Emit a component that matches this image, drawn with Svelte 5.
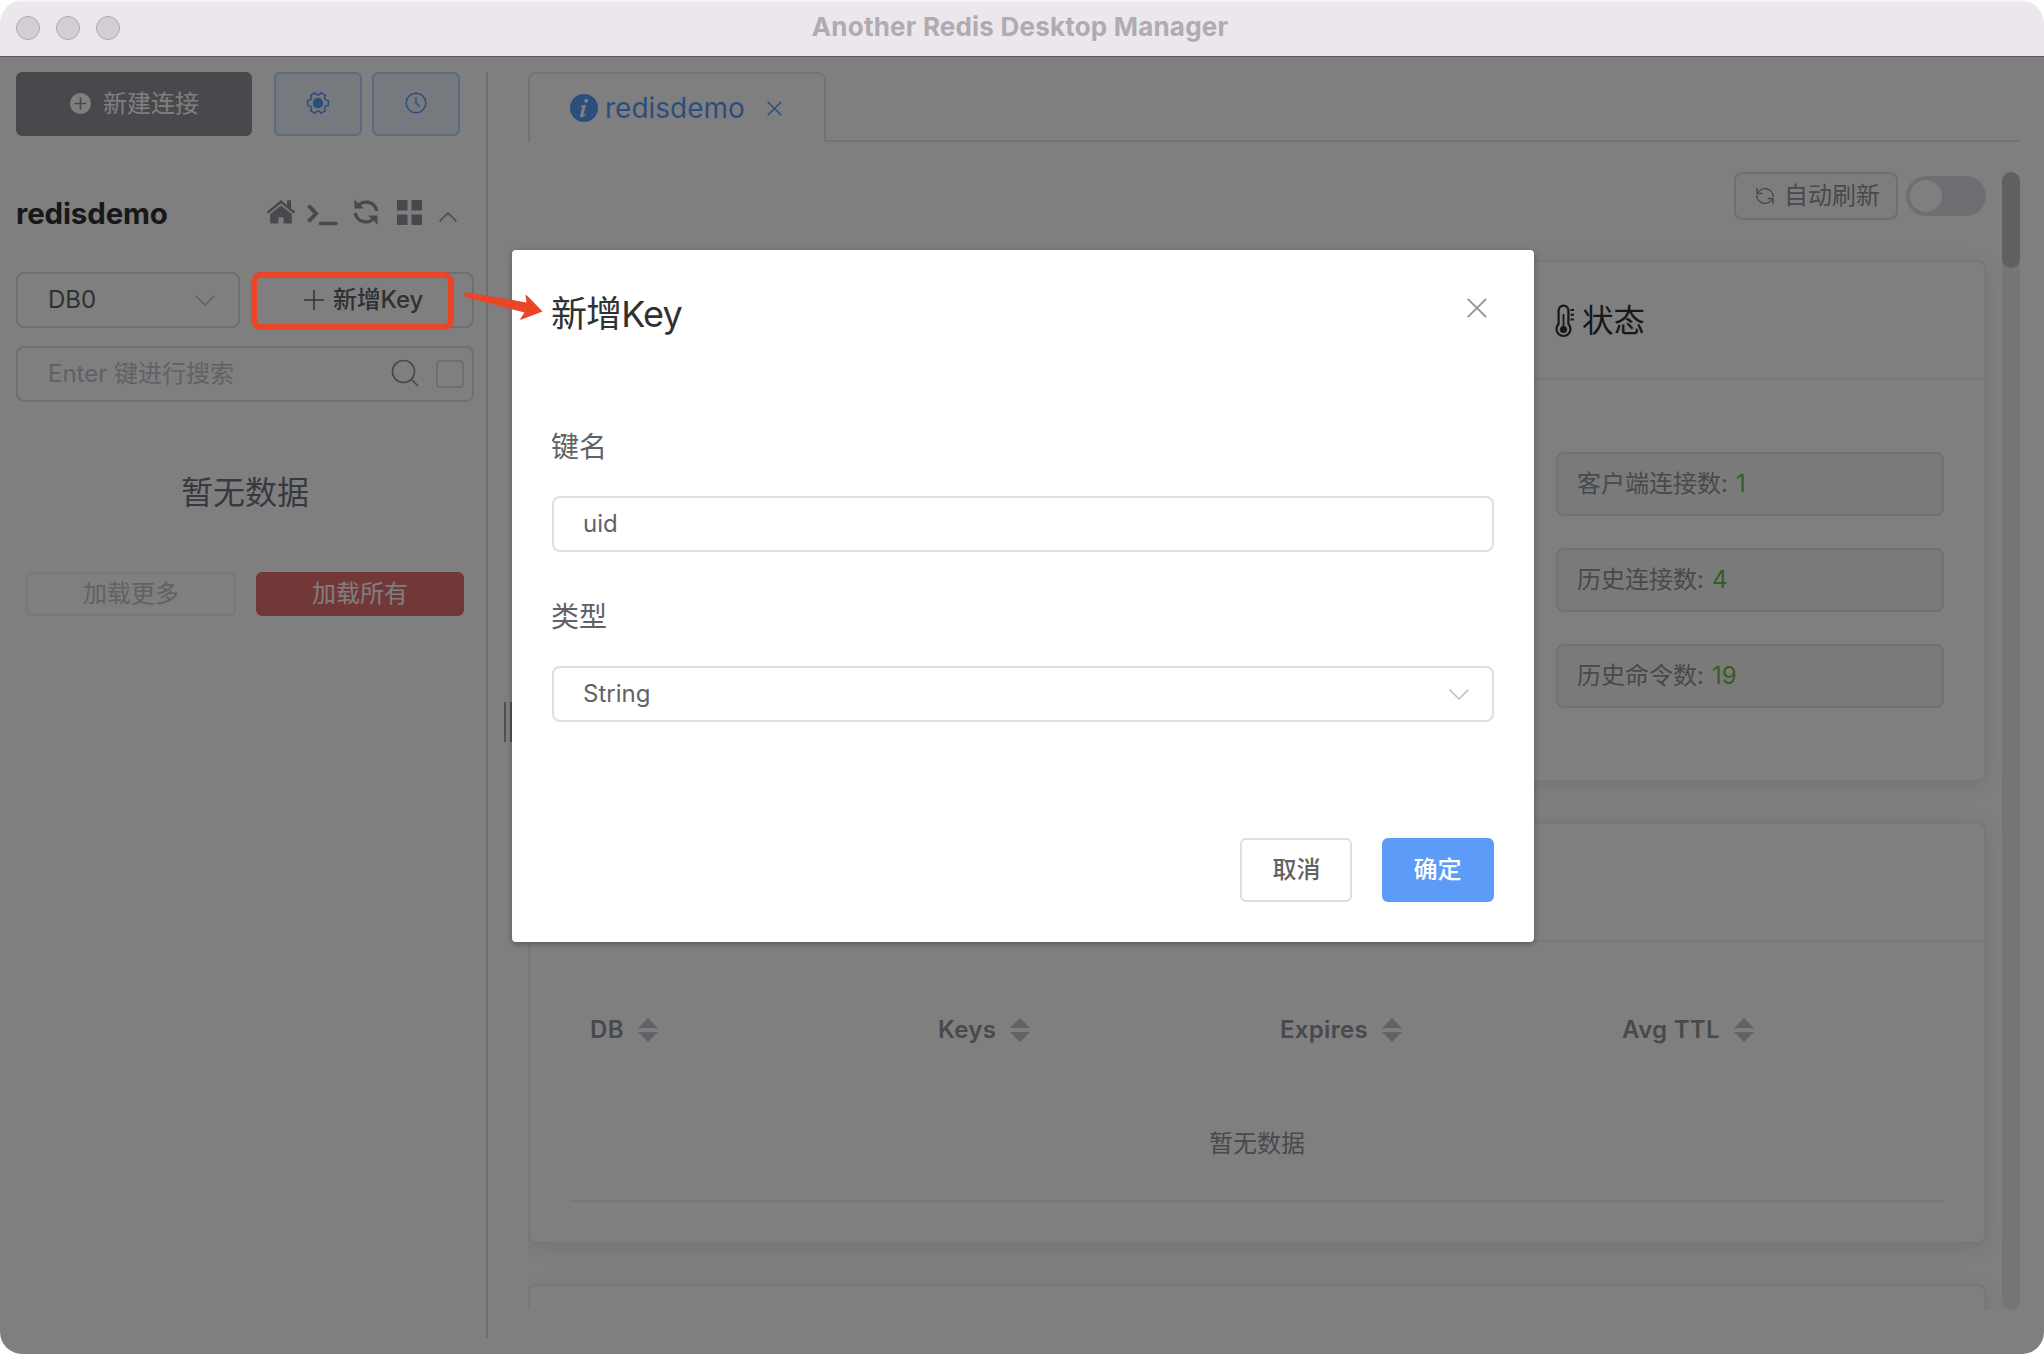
<script>
  const stats = [
    { label: '客户端连接数:', value: 1 },
    { label: '历史连接数:', value: 4 },
    { label: '历史命令数:', value: 19 }
  ];
  const columns = ['DB', 'Keys', 'Expires', 'Avg TTL'];
  let keyName = $state('uid');

  // Outline of the six-toothed settings gear, centred on (11, 11)
  const point = (deg, r) => {
    const a = (deg * Math.PI) / 180;
    return `${(11 + r * Math.cos(a)).toFixed(2)} ${(11 + r * Math.sin(a)).toFixed(2)}`;
  };
  const gear =
    'M' +
    [0, 60, 120, 180, 240, 300]
      .flatMap((d) => [point(d - 21, 8.3), point(d - 14, 10.7), point(d + 14, 10.7), point(d + 21, 8.3)])
      .join('L') +
    'Z';
</script>

<div class="window">
  <header class="titlebar">
    <div class="lights"><i></i><i></i><i></i></div>
    <h1>Another Redis Desktop Manager</h1>
  </header>

  <div class="content">
    <aside class="sidebar">
      <div class="top-actions">
        <button class="btn new-conn">
          <svg width="21" height="21" viewBox="0 0 21 21"><circle cx="10.5" cy="10.5" r="10.5" fill="#fff" /><path d="M10.5 4.5v12M4.5 10.5h12" stroke="#909399" stroke-width="1.6" /></svg>
          <span>新建连接</span>
        </button>
        <button class="btn plain gear" aria-label="settings">
          <svg width="22" height="22" viewBox="0 0 22 22" overflow="visible"><path d={gear} fill="none" stroke="#5a9cf8" stroke-width="1.5" stroke-linejoin="round" /><circle cx="11" cy="11" r="5.2" fill="#5a9cf8" /></svg>
        </button>
        <button class="btn plain clock" aria-label="history">
          <svg width="22" height="22" viewBox="0 0 22 22" fill="none" stroke="#5a9cf8" stroke-width="1.5"><circle cx="11" cy="11" r="9.8" /><path d="M11 5V11l3.600 3.800" /></svg>
        </button>
      </div>

      <div class="conn-head">
        <strong>redisdemo</strong>
        <div class="conn-icons">
          <svg width="30" height="26" viewBox="0 0 30 26" fill="#909399"><path d="M15 1L.7 12.7l1.5 2L15 4.500l12.800 10.200 1.500-2L25 9.200V1.300h-4v4.600z" /><path d="M15 6.500L4.200 15v9.600h8.200v-6h5.200v6h8.200V15z" /></svg>
          <svg class="term" width="33" height="24" viewBox="0 0 33 24" fill="none" stroke="#909399" stroke-linecap="round"><path d="M2.500 3.500l7.500 8-7.500 8" stroke-width="4" stroke-linecap="butt" /><path d="M14.500 21.500h15.500" stroke-width="3.600" /></svg>
          <svg class="sync" width="28" height="28" viewBox="0 0 28 28" fill="none" stroke="#909399" stroke-width="3.400"><path d="M5 9.500A10.600 10.600 0 0 1 24.700 13" /><path d="M23 18.500A10.600 10.600 0 0 1 3.300 15" /><path d="M2.500 1.500v9h9.500L9 7.500 5.500 4.500z" fill="#909399" stroke="none" /><path d="M25.500 26.500v-9H16l3 3 3.500 3z" fill="#909399" stroke="none" /></svg>
          <svg class="grid" width="25" height="25" viewBox="0 0 25 25" fill="#909399"><path d="M0 0h10.500v10.500H0zM14.500 0H25v10.500H14.500zM0 14.500h10.500V25H0zM14.500 14.500H25V25H14.500z" /></svg>
          <svg class="caret" width="18" height="10" viewBox="0 0 18 10" fill="none" stroke="#909399" stroke-width="1.5"><path d="M.5 9.500L9 1l8.500 8.500" /></svg>
        </div>
      </div>

      <div class="key-row">
        <div class="field db">
          <span>DB0</span>
          <svg width="20" height="11" viewBox="0 0 20 11" fill="none" stroke="#c0c4cc" stroke-width="1.6"><path d="M.6.6L10 10l9.400-9.400" /></svg>
        </div>
        <div class="field add">
          <svg width="20" height="20" viewBox="0 0 20 20" stroke="#606266" stroke-width="1.5"><path d="M10 0v20M0 10h20" /></svg>
          <span>新增Key</span>
        </div>
      </div>

      <div class="field search">
        <span>Enter 键进行搜索</span>
        <svg width="28" height="28" viewBox="0 0 28 28" fill="none" stroke="#909399" stroke-width="1.7"><circle cx="12.5" cy="12.5" r="11" /><path d="M20.500 20.500l6.500 6.500" /></svg>
        <i class="check"></i>
      </div>

      <p class="side-empty">暂无数据</p>

      <div class="load-row">
        <button class="btn load more">加载更多</button>
        <button class="btn load all">加载所有</button>
      </div>
    </aside>

    <div class="resizer"><i></i><i></i></div>

    <main>
      <nav class="tabs">
        <div class="tab">
          <svg width="28" height="28" viewBox="0 0 28 28"><circle cx="14" cy="14" r="14" fill="#5a9cf8" /><path d="M11 11.800c2-.2 3.200-.5 5.200-1.200l-2.700 9.600c-.3 1.100.5 1 2.200-1l.6.5c-1.900 2.600-3.200 3.500-4.700 3.500-1.400 0-1.800-.9-1.400-2.300l1.900-6.700c.3-1-.1-1.300-1.300-1.500z" fill="#fff" /><circle cx="16.2" cy="6.700" r="2" fill="#fff" /></svg>
          <span>redisdemo</span>
          <svg class="tab-x" width="15" height="15" viewBox="0 0 15 15" stroke="#5a9cf8" stroke-width="1.5"><path d="M.7.7l13.600 13.600M14.300.7L.7 14.300" /></svg>
        </div>
      </nav>

      <div class="scroller">
        <div class="view">
          <div class="refresh-row">
            <div class="refresh">
              <svg width="20" height="20" viewBox="0 0 20 20" fill="none" stroke="#909399" stroke-width="1.5"><path d="M3 7.200A8 8 0 0 1 18.200 11" /><path d="M17 12.800A8 8 0 0 1 1.800 9" /><path d="M2 2v5.600h5.600" /><path d="M18 18v-5.600h-5.600" /></svg>
              <span>自动刷新</span>
            </div>
            <div class="switch"><i></i></div>
          </div>

          <div class="cards">
            <section class="card"><div class="card-head"></div></section>
            <section class="card"><div class="card-head"></div></section>
            <section class="card">
              <div class="card-head">
                <svg width="20" height="35" viewBox="0 0 20 35" fill="none" stroke="#303133" stroke-width="2.2"><path d="M3.600 20V6.500a4.900 4.900 0 0 1 9.800 0V20a7 7 0 1 1-9.800 0z" /><circle cx="8.5" cy="25.5" r="3.6" fill="#303133" stroke="none" /><path d="M8.500 10v15" stroke-width="1.8" /><path d="M15.500 6H19M15.500 10.700H19M15.500 15.400H19" stroke-width="2" /></svg>
                <span>状态</span>
              </div>
              <div class="stats">
                {#each stats as s}
                  <div class="stat">{s.label} <b>{s.value}</b></div>
                {/each}
              </div>
            </section>
          </div>

          <section class="card keys">
            <div class="card-head"></div>
            <div class="table">
              <div class="thead">
                {#each columns as c}
                  <div class="th">
                    <span>{c}</span>
                    <svg width="20" height="24" viewBox="0 0 20 24" fill="#c0c4cc"><path d="M10 0l10 10H0zM10 24L0 14h20z" /></svg>
                  </div>
                {/each}
              </div>
              <div class="tbody">暂无数据</div>
            </div>
          </section>

          <section class="card next"></section>
        </div>
        <div class="track"><i></i></div>
      </div>
    </main>

    <div class="mask"></div>
  </div>

  <div class="dialog">
    <div class="dialog-head">
      <h2>新增Key</h2>
      <svg width="20" height="20" viewBox="0 0 20 20" stroke="#909399" stroke-width="1.8"><path d="M.8.8l18.400 18.400M19.200.8L.8 19.200" /></svg>
    </div>
    <div class="label">键名</div>
    <input class="control" bind:value={keyName} />
    <div class="label second">类型</div>
    <div class="control select">
      <span>String</span>
      <svg width="20" height="11" viewBox="0 0 20 11" fill="none" stroke="#c0c4cc" stroke-width="1.7"><path d="M.6.6L10 10l9.400-9.400" /></svg>
    </div>
    <div class="dialog-foot">
      <button class="btn cancel">取消</button>
      <button class="btn ok">确定</button>
    </div>
  </div>

  <!-- Guide annotation: highlighted button and arrow to the dialog title -->
  <div class="mark"></div>
  <svg class="arrow" width="80" height="32" viewBox="0 0 80 32"><path d="M.5 1.500Q.5 0 2 .2L62.500 10.500 61.500 3.500Q61.800 2.500 63 3.500L78.500 19.500 57.500 27.500Q56 28 56.500 26.500L60.500 20.500 1.500 5Q.5 4.500.5 3.500z" fill="#eb4427" /></svg>
</div>

<style>
  :global(body) { background: #fff; }
  .window, .window * { box-sizing: border-box; }
  .window {
    position: relative;
    width: 2044px;
    height: 1354px;
    border-radius: 24px 24px 22px 22px;
    overflow: hidden;
    display: flex;
    flex-direction: column;
    font-family: Inter, "Noto Sans CJK SC", sans-serif;
    font-size: 24px;
    line-height: 1;
    color: #606266;
  }
  i, b { font-style: normal; font-weight: 400; display: block; }
  svg { display: block; flex: none; }
  p, h1, h2 { margin: 0; }
  .titlebar {
    height: 57px;
    flex: none;
    display: flex;
    align-items: center;
    background: #ece7ed;
    border-top: 2px solid #f5f2f6;
    border-bottom: 1px solid #5c5560;
    padding: 0 16px 2px;
  }
  .lights { display: flex; gap: 16px; width: 416px; }
  .lights i { width: 24px; height: 24px; border-radius: 50%; background: #d3ced4; border: 1px solid #aba6ad; }
  h1 { flex: 1; text-align: center; font-size: 26px; font-weight: 700; color: #b0abb1; padding: 0 420px 2px 0; letter-spacing: .2px; }

  .content { position: relative; flex: 1; display: flex; background: #fff; min-height: 0; }
  .mask { position: absolute; inset: 0; background: rgba(0, 0, 0, .5); }
  .btn { font: inherit; padding: 0; display: flex; align-items: center; justify-content: center; border-radius: 6px; border: 0; }

  .sidebar { width: 488px; margin: 15px 0 16px; padding-left: 16px; border-right: 2px solid #dcdcdc; }
  .top-actions { display: flex; height: 64px; }
  .new-conn { width: 236px; background: #909399; color: #fff; gap: 12px; padding: 0 0 1px 1px; }
  .plain { width: 88px; background: #ecf4ff; border: 2px solid #b8d5fb; padding-bottom: 2px; }
  .gear { margin-left: 22px; }
  .clock { margin-left: 10px; }
  .conn-head { margin-top: 55px; height: 42px; display: flex; align-items: center; }
  .conn-head strong { width: 250px; font-size: 29.5px; font-weight: 700; color: #303133; letter-spacing: -.15px; padding-top: 3px; }
  .conn-icons { display: flex; align-items: center; height: 28px; }
  .term { margin: 4px 0 0 10px; }
  .sync { margin-left: 13px; }
  .grid { margin-left: 17px; }
  .caret { margin: 9px 0 0 17px; }

  .field { height: 56px; border: 2px solid #dcdfe6; border-radius: 8px; display: flex; align-items: center; }
  .key-row { display: flex; gap: 12px; margin-top: 39px; width: 458px; }
  .db { width: 224px; padding: 0 23px 0 30px; justify-content: space-between; }
  .add { flex: 1; padding-left: 50px; gap: 9px; font-weight: 500; }
  .add span { letter-spacing: -.2px; }
  .search { width: 458px; margin-top: 18px; padding: 0 8px 0 30px; color: #c0c4cc; }
  .search span { flex: 1; }
  .search svg { margin-bottom: 2px; }
  .check { width: 28px; height: 28px; border: 2px solid #dcdfe6; border-radius: 4px; margin-left: 17px; }
  .side-empty { width: 458px; text-align: center; font-size: 32px; line-height: 40px; margin-top: 71px; color: #6f7180; }
  .load-row { display: flex; gap: 20px; padding-left: 10px; margin-top: 59px; }
  .load { height: 44px; width: 210px; }
  .more { background: #fff; border: 2px solid #ebeef5; color: #c0c4cc; }
  .all { width: 208px; background: #e4706f; color: #fff; }

  .resizer { width: 40px; padding: 645px 0 0 16px; display: flex; gap: 4px; }
  .resizer i { width: 2px; height: 40px; background: #a0a0a0; }

  main { flex: 1; min-width: 0; margin: 15px 24px 44px 0; display: flex; flex-direction: column; }
  .tabs { height: 70px; flex: none; display: flex; }
  .tabs::after { content: ""; flex: 1; border-bottom: 2px solid #e4e7ed; }
  .tab { width: 298px; border: 2px solid #e4e7ed; border-bottom: 0; border-radius: 8px 8px 0 0; display: flex; align-items: center; padding-left: 40px; color: #5a9cf8; font-size: 28px; }
  .tab span { margin-left: 7px; width: 162px; }
  .scroller { flex: 1; min-height: 0; margin-top: 30px; display: flex; justify-content: space-between; overflow: hidden; }
  .view { width: 1458px; display: flex; flex-direction: column; }
  .refresh-row { display: flex; justify-content: flex-end; align-items: center; gap: 8px; flex: none; height: 48px; }
  .refresh { width: 164px; height: 48px; border: 2px solid #dcdde0; border-radius: 8px; background: #fbfbfb; color: #909399; display: flex; align-items: center; padding-left: 19px; gap: 9px; }
  .switch { width: 80px; height: 40px; border-radius: 20px; background: #dcdfe6; padding: 4px; }
  .switch i { width: 32px; height: 32px; border-radius: 50%; background: #fff; }
  .cards { display: flex; justify-content: space-between; margin-top: 40px; flex: none; height: 522px; }
  .card { width: 472px; border: 2px solid #ebeef5; border-radius: 8px; background: #fff; box-shadow: 0 4px 24px rgba(0, 0, 0, .1); flex: none; }
  .card-head { height: 118px; border-bottom: 2px solid #ebeef5; padding: 2px 0 0 39px; display: flex; align-items: center; gap: 7px; font-size: 31.5px; color: #303133; }
  .stats { padding: 72px 40px 0; display: flex; flex-direction: column; gap: 32px; }
  .stat { height: 64px; border: 2px solid #e4e4e8; border-radius: 8px; background: #f4f4f5; color: #909399; display: flex; align-items: center; padding-left: 19px; gap: 8px; }
  .stat b { color: #6cb948; }
  .keys { width: 100%; margin-top: 40px; height: 422px; }
  .table { margin: 48px 40px 0; height: 212px; border-bottom: 2px solid #ebeef5; }
  .thead { display: grid; grid-template-columns: 348px 342px 342px 342px; height: 80px; }
  .th { display: flex; align-items: center; gap: 14px; padding-left: 20px; font-weight: 600; color: #909399; letter-spacing: .3px; }
  .tbody { height: 148px; display: flex; align-items: center; justify-content: center; color: #909399; }
  .next { width: 100%; height: 200px; margin-top: 40px; }
  .track { width: 18px; background: #eaeaea; border-radius: 9px; }
  .track i { height: 96px; background: #c1c1c1; border-radius: 9px; }

  .dialog { position: absolute; left: 512px; top: 250px; width: 1022px; height: 692px; background: #fff; border-radius: 4px; box-shadow: 0 2px 6px rgba(0, 0, 0, .3); padding: 45px 40px 0; display: flex; flex-direction: column; }
  .dialog-head { height: 37px; flex: none; display: flex; justify-content: space-between; padding-right: 7px; align-items: center; }
  .dialog-head svg { margin-bottom: 12px; }
  h2 { font-size: 36px; font-weight: 400; color: #303133; letter-spacing: -.9px; margin-left: -1px; padding-top: 1px; }
  .label { font-size: 28px; height: 40px; line-height: 40px; margin: 95px 0 0 -1px; flex: none; }
  .label.second { margin-top: 45px; }
  .control { font: inherit; color: #606266; width: 942px; height: 56px; flex: none; margin-top: 29px; border: 2px solid #dcdfe6; border-radius: 8px; padding: 0 23px 1px 29px; outline: 0; background: #fff; }
  .select { display: flex; align-items: center; justify-content: space-between; padding-bottom: 0; }
  .dialog-foot { display: flex; justify-content: flex-end; gap: 30px; margin-top: 116px; }
  .cancel, .ok { width: 112px; height: 64px; font-weight: 500; }
  .cancel { background: #fff; border: 2px solid #dcdfe6; color: #606266; padding-left: 1px; }
  .ok { background: #5c9cf8; color: #fff; padding-right: 1px; }

  .mark { position: absolute; left: 251px; top: 272px; width: 203px; height: 58px; border: 6px solid #eb4427; border-radius: 10px; }
  .arrow { position: absolute; left: 464px; top: 292px; }
</style>
